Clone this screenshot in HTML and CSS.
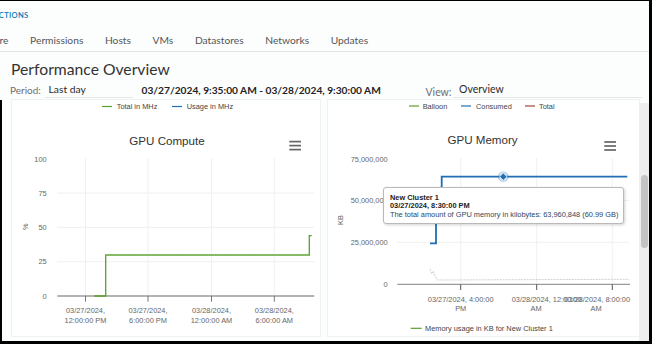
FILE: index.html
```html
<!DOCTYPE html>
<html>
<head>
<meta charset="utf-8">
<link rel="stylesheet" href="styles.css">
</head>
<body>
<div class="frame">
  <div class="crumb"><span class="crumb-clip"><span class="crumb-link">ACTIONS</span></span></div>
  <nav class="tabs">
    <span class="tab tab-cut"><span>Configure</span></span>
    <span class="tab">Permissions</span>
    <span class="tab">Hosts</span>
    <span class="tab">VMs</span>
    <span class="tab">Datastores</span>
    <span class="tab">Networks</span>
    <span class="tab">Updates</span>
  </nav>
  <h1 class="title">Performance Overview</h1>
  <div class="filters">
    <span class="flabel">Period:</span>
    <span class="select period-select">Last day</span>
    <span class="range">03/27/2024, 9:35:00 AM - 03/28/2024, 9:30:00 AM</span>
    <span class="view-group">
      <span class="flabel view-label">View:</span>
      <span class="select view-select">Overview</span>
    </span>
  </div>
  <div class="content">
    <section class="panel panel-left">
      <svg class="chart" width="308" height="236" viewBox="0 0 308 236">
        <g class="legend">
          <line x1="90" y1="6.5" x2="100" y2="6.5" stroke="#5aa02c" stroke-width="1.2"/>
          <text x="104.7" y="9.1">Total in MHz</text>
          <line x1="160" y1="6.5" x2="170" y2="6.5" stroke="#1f6fb2" stroke-width="1.2"/>
          <text x="174.7" y="9.1">Usage in MHz</text>
        </g>
        <text class="ctitle" x="155" y="44.8" text-anchor="middle">GPU Compute</text>
        <g stroke="#666" stroke-width="1.7">
          <line x1="277.3" y1="41.6" x2="289" y2="41.6"/>
          <line x1="277.3" y1="45.6" x2="289" y2="45.6"/>
          <line x1="277.3" y1="49.6" x2="289" y2="49.6"/>
        </g>
        <g stroke="#f0f0f0" stroke-width="1">
          <line x1="45.3" y1="93.1" x2="302.3" y2="93.1"/>
          <line x1="45.3" y1="127.4" x2="302.3" y2="127.4"/>
          <line x1="45.3" y1="161.7" x2="302.3" y2="161.7"/>
          <line x1="73.5" y1="57.7" x2="73.5" y2="196"/>
          <line x1="136" y1="57.7" x2="136" y2="196"/>
          <line x1="199.5" y1="57.7" x2="199.5" y2="196"/>
          <line x1="262.3" y1="57.7" x2="262.3" y2="196"/>
        </g>
        <g class="axis-label" text-anchor="end">
          <text x="34.7" y="61.6">100</text>
          <text x="34.7" y="96">75</text>
          <text x="34.7" y="129.9">50</text>
          <text x="34.7" y="164.3">25</text>
          <text x="34.7" y="198.6">0</text>
        </g>
        <text class="axis-label" transform="translate(15.8 126.7) rotate(-90)" text-anchor="middle">%</text>
        <line x1="45.3" y1="196" x2="302.3" y2="196" stroke="#9a9a9a" stroke-width="1.3"/>
        <g stroke="#777" stroke-width="1">
          <line x1="73.5" y1="196" x2="73.5" y2="201.7"/>
          <line x1="136" y1="196" x2="136" y2="201.7"/>
          <line x1="199.5" y1="196" x2="199.5" y2="201.7"/>
          <line x1="262.3" y1="196" x2="262.3" y2="201.7"/>
        </g>
        <g class="axis-label" text-anchor="middle">
          <text x="73.5" y="213.3">03/27/2024,</text>
          <text x="73.5" y="222.6">12:00:00 PM</text>
          <text x="136" y="213.3">03/27/2024,</text>
          <text x="136" y="222.6">6:00:00 PM</text>
          <text x="199.5" y="213.3">03/28/2024,</text>
          <text x="199.5" y="222.6">12:00:00 AM</text>
          <text x="262.3" y="213.3">03/28/2024,</text>
          <text x="262.3" y="222.6">6:00:00 AM</text>
        </g>
        <polyline points="82.3,196 93.7,196 93.7,155 297.3,155 297.3,135.7 299.7,135.7" fill="none" stroke="#5aa02c" stroke-width="1.3"/>
        <polyline points="93.7,155 297.3,155" fill="none" stroke="#a9d38a" stroke-width="0.6" stroke-dasharray="1.5 1.5"/>
      </svg>
    </section>
    <section class="panel panel-right">
      <svg class="chart" width="311" height="236" viewBox="0 0 311 236">
        <g class="legend">
          <line x1="81" y1="6" x2="91" y2="6" stroke="#5aa02c" stroke-width="1.2"/>
          <text x="94.7" y="8.6">Balloon</text>
          <line x1="133" y1="6" x2="143" y2="6" stroke="#1f6fb2" stroke-width="1.2"/>
          <text x="148" y="8.6">Consumed</text>
          <line x1="197" y1="6" x2="207" y2="6" stroke="#a0473c" stroke-width="1.2"/>
          <text x="211" y="8.6">Total</text>
        </g>
        <text class="ctitle" x="154.5" y="44.3" text-anchor="middle">GPU Memory</text>
        <g stroke="#666" stroke-width="1.7">
          <line x1="276.3" y1="42" x2="288" y2="42"/>
          <line x1="276.3" y1="46" x2="288" y2="46"/>
          <line x1="276.3" y1="50" x2="288" y2="50"/>
        </g>
        <g stroke="#f0f0f0" stroke-width="1">
          <line x1="69.3" y1="100.3" x2="301.3" y2="100.3"/>
          <line x1="69.3" y1="142.3" x2="301.3" y2="142.3"/>
          <line x1="132.7" y1="57.7" x2="132.7" y2="184.3"/>
          <line x1="208.7" y1="57.7" x2="208.7" y2="184.3"/>
          <line x1="284.3" y1="57.7" x2="284.3" y2="184.3"/>
        </g>
        <g class="axis-label" text-anchor="end">
          <text x="59.7" y="61.6">75,000,000</text>
          <text x="59.7" y="103.1">50,000,000</text>
          <text x="59.7" y="144.9">25,000,000</text>
          <text x="59.7" y="186.9">0</text>
        </g>
        <text class="axis-label" transform="translate(15 120) rotate(-90)" text-anchor="middle">KB</text>
        <line x1="69.3" y1="184.3" x2="302" y2="184.3" stroke="#9a9a9a" stroke-width="1.3"/>
        <g stroke="#555" stroke-width="1">
          <line x1="132.7" y1="184.3" x2="132.7" y2="190"/>
          <line x1="208.7" y1="184.3" x2="208.7" y2="190"/>
          <line x1="284.3" y1="184.3" x2="284.3" y2="190"/>
        </g>
        <g class="axis-label">
          <text x="132.7" y="201.6" text-anchor="middle">03/27/2024, 4:00:00</text>
          <text x="132.7" y="210.9" text-anchor="middle">PM</text>
          <text x="183.7" y="201.6">03/28/2024, 12:00:00</text>
          <text x="208" y="210.9" text-anchor="middle">AM</text>
          <text x="236.3" y="201.6">03/28/2024, 8:00:00</text>
          <text x="268" y="210.9" text-anchor="middle">AM</text>
        </g>
        <polyline points="102,169 104,174 105.5,171 107,176 109.3,180 301.3,179.3" fill="none" stroke="#d0d0d0" stroke-width="1" stroke-dasharray="2 1"/>
        <polyline points="102,143.3 108,143.3 108,122 113.7,86 113.7,76.7 299.3,76.7" fill="none" stroke="#1f6fb2" stroke-width="1.8"/>
        <circle cx="175.3" cy="76.7" r="5.5" fill="#1f6fb2" fill-opacity="0.25"/>
        <polygon points="175.3,73 179,76.7 175.3,80.4 171.6,76.7" fill="#1f6fb2" stroke="#fff" stroke-width="0.8"/>
        <g class="legend">
          <line x1="82.7" y1="228.3" x2="93.7" y2="228.3" stroke="#5aa02c" stroke-width="1.2"/>
          <text x="97" y="230.9">Memory usage in KB for New Cluster 1</text>
        </g>
      </svg>
      <div class="tooltip">
        <div class="tt-strong">New Cluster 1</div>
        <div class="tt-strong">03/27/2024, 8:30:00 PM</div>
        <div class="tt-body">The total amount of GPU memory in kilobytes: 63,960,848 (60.99 GB)</div>
      </div>
    </section>
    <div class="scrollbar"><div class="thumb"></div></div>
  </div>
</div>
</body>
</html>
```
FILE: styles.css
```css
html, body {
  margin: 0;
  padding: 0;
  background: #ffffff;
}

.frame {
  width: 652px;
  height: 344px;
  box-sizing: border-box;
  border-top: 1px solid #000;
  border-right: 3px solid #000;
  border-bottom: 3px solid #000;
  background: #fcfdfd;
  overflow: hidden;
  display: flex;
  flex-direction: column;
  font-family: Lato, "Open Sans", sans-serif;
  color: #333;
}

.crumb {
  height: 28px;
  display: flex;
  align-items: center;
  flex: none;
}

.crumb-clip {
  width: 28.5px;
  display: flex;
  justify-content: flex-end;
}

.crumb-link {
  font-size: 7.6px;
  letter-spacing: 0.3px;
  color: #0079b8;
  font-weight: 600;
  white-space: nowrap;
}

.tabs {
  height: 22px;
  flex: none;
  display: flex;
  gap: 21.6px;
  align-items: center;
  border-bottom: 1px solid #e2e4e4;
  font-size: 10.25px;
  color: #555;
}

.tab {
  white-space: nowrap;
}

.tab-cut {
  width: 8.5px;
  display: flex;
  justify-content: flex-end;
}

.title {
  flex: none;
  margin: 0;
  padding: 7px 0 0 11px;
  line-height: 20px;
  height: 20px;
  font-size: 15.7px;
  font-weight: 400;
  color: #333;
}

.filters {
  flex: none;
  height: 21px;
  display: flex;
  align-items: center;
  padding: 0 7px 0 10px;
  font-size: 10px;
}

.flabel {
  color: #6e6e6e;
}

.select {
  box-sizing: border-box;
  height: 17px;
  line-height: 16px;
  padding-left: 3.7px;
  border-bottom: 1px solid #e6e8e8;
  color: #2b2b2b;
  font-size: 10.3px;
}

.period-select {
  width: 88px;
  margin-left: 4px;
}

.range {
  margin-left: 8.7px;
  font-weight: 700;
  font-size: 10.2px;
  color: #222;
  white-space: nowrap;
}

.view-group {
  margin-left: auto;
  display: flex;
  align-items: center;
}

.view-label {
  margin-top: 4px;
  font-size: 10.5px;
}

.view-select {
  width: 189px;
  margin-left: 1.5px;
  padding-left: 6px;
  font-size: 10.5px;
}

.content {
  flex: 1;
  display: flex;
  align-items: flex-start;
  gap: 8px;
  border-left: 2px solid #000;
  padding-left: 10px;
}

.panel {
  position: relative;
  height: 236px;
  background: #ffffff;
  box-shadow: 0 0 0 1px #f0f2f2;
  flex: none;
}

.panel-left {
  width: 308px;
}

.panel-right {
  width: 311px;
}

.chart {
  display: block;
  font-family: "Liberation Sans", Arial, sans-serif;
}

.chart text {
  font-size: 7.4px;
}

.chart .legend text {
  fill: #444;
}

.chart .axis-label text,
.chart text.axis-label {
  fill: #666;
}

.chart text.ctitle {
  font-size: 11.6px;
  fill: #333;
}

.tooltip {
  position: absolute;
  left: 54.7px;
  top: 86.7px;
  width: 241.6px;
  height: 37.3px;
  box-sizing: border-box;
  padding: 6.4px 0 0 6.3px;
  background: #ffffff;
  border: 1px solid #b9b9b9;
  border-radius: 3px;
  box-shadow: 1px 1px 3px rgba(0, 0, 0, 0.18);
  font-family: "Liberation Sans", Arial, sans-serif;
  font-size: 7.4px;
  line-height: 8.4px;
  white-space: nowrap;
}

.tt-strong {
  font-weight: 700;
  color: #222;
}

.tt-body {
  color: #2a4763;
}

.scrollbar {
  width: 10px;
  height: 238px;
  margin-top: 3px;
  margin-left: -8px;
  background: #eeeeee;
  position: relative;
  flex: none;
}

.thumb {
  position: absolute;
  left: 1.5px;
  top: 72px;
  width: 7px;
  height: 73px;
  border-radius: 4px;
  background: #c4c4c4;
}
```
